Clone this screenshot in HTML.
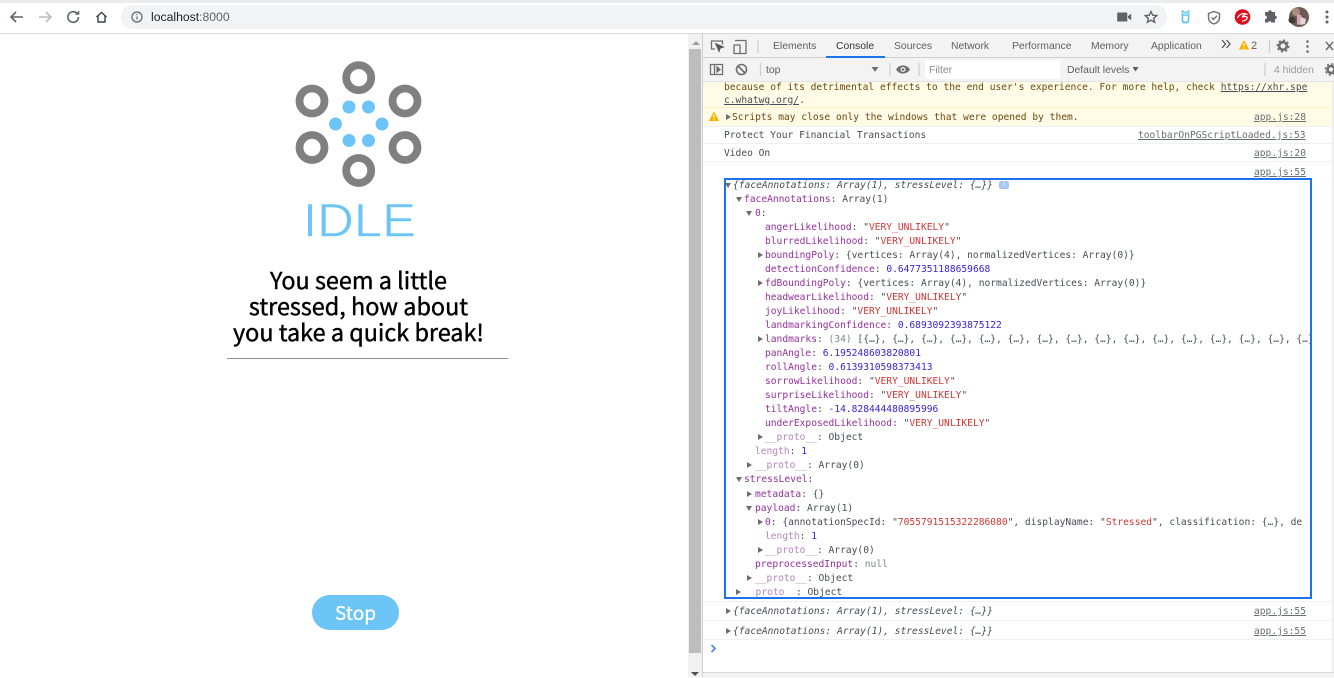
<!DOCTYPE html>
<html><head><meta charset="utf-8"><title>localhost:8000</title>
<style>
html,body{margin:0;padding:0;width:1334px;height:677px;overflow:hidden;background:#fff;font-family:"Liberation Sans",sans-serif}
.a{position:absolute}
#c{position:absolute;left:0;top:1px}
#c div{position:absolute;white-space:pre;font:9.6px/14px "DejaVu Sans Mono",monospace;color:#474d55;height:14px}
#c .o{font-style:italic}
i{font-style:normal}
.k{color:#94309c}.f{color:#b684bb}.s{color:#cf3733}.n{color:#3a22d6}.g{color:#80868b}
#c .l{color:#6a6e73;text-decoration:underline}
.t{position:absolute;font-size:10.4px;line-height:14px;color:#5f5f5f;white-space:pre}
.ar{position:absolute;width:0;height:0;border-top:3px solid transparent;border-bottom:3px solid transparent;border-left:5px solid #6e6e6e}
.ad{position:absolute;width:0;height:0;border-left:3px solid transparent;border-right:3px solid transparent;border-top:5px solid #6e6e6e}
.b{position:absolute;height:1px;background:#f0f0f0;left:703px;width:629px}
</style></head><body>
<!-- browser bar -->
<div class="a" style="left:0;top:0;width:1334px;height:3px;background:#e9ebee"></div>
<div class="a" style="left:0;top:33px;width:1334px;height:1px;background:#d5d7da"></div>
<div class="a" style="left:121px;top:5px;width:1046px;height:24px;border-radius:12px;background:#f1f3f4"></div>
<svg class="a" style="left:0;top:0" width="240" height="34" fill="none" stroke="#5f6368" stroke-width="1.6">
<path d="M23 17H11M16 12l-5 5 5 5"/>
<path d="M39 17h12M46 12l5 5-5 5" stroke="#b9bcc0"/>
<path d="M78.5 17a5.3 5.3 0 1 1-1.6-3.8"/><path d="M79.3 10.3v4.4h-4.4z" fill="#5f6368" stroke="none"/>
<path d="M96.5 17l5-4.6 5 4.6M98 16v6h7v-6" stroke="#3c4043" stroke-width="1.4"/>
<circle cx="137" cy="17" r="5" stroke-width="1.2"/><path d="M137 16.5v3M137 14v1.2" stroke-width="1.2"/>
</svg>
<div class="a" style="left:151px;top:9px;font-size:12.2px;line-height:16px;color:#202124">localhost<span style="color:#5f6368">:8000</span></div>
<svg class="a" style="left:1110px;top:0" width="224" height="34">
<path d="M8 12.5h8.500a.8.8 0 0 1 .8.8v7.400a.8.8 0 0 1-.8.8H8a.8.8 0 0 1-.8-.8v-7.400a.8.8 0 0 1 .8-.8zM18 16l3.200-2.200v6.400L18 18z" fill="#5f6368"/>
<path d="M41 11.500l1.700 3.700 4 .4-3 2.700.9 4-3.600-2.100-3.600 2.100.9-4-3-2.700 4-.4z" fill="none" stroke="#5f6368" stroke-width="1.400"/>
<path d="M72.500 14v7a1.500 1.500 0 0 0 1.500 1.500h3a1.500 1.500 0 0 0 1.500-1.500v-7" fill="none" stroke="#5cc3ee" stroke-width="1.700"/><path d="M72 10.500l3.500 2 3.500-2v4l-3.500 1.500-3.500-1.500z" fill="#a8e0f4" stroke="#5cc3ee" stroke-width=".8"/>
<path d="M104 11.500l5.500 2v4c0 3.500-2.500 5.500-5.500 6.500-3-1-5.500-3-5.500-6.500v-4z" fill="none" stroke="#6b6f73" stroke-width="1.400"/><path d="M101.500 17.500l2 2 3.500-3.800" fill="none" stroke="#6b6f73" stroke-width="1.400"/>
<circle cx="132.500" cy="17" r="7.800" fill="#dc0f1e"/><path d="M127.500 18c1.500-3.500 5.500-5.500 9-4-2 .3-3.500 1.200-4 3 2-.8 3.800-.6 5 .3-.7 2.700-3.500 4-5.500 3.500" fill="none" stroke="#fff" stroke-width="1.200"/>
<path d="M155 12h3.200a1.800 1.800 0 0 1 3.600 0h3.200v3.500a1.800 1.800 0 0 1 0 3.600v3.400h-3.600a1.800 1.800 0 0 0-3.400 0H155v-3.400a1.800 1.800 0 0 0 0-3.600z" fill="#5f6368"/>
<circle cx="189" cy="17" r="10" fill="#6d5a50"/><circle cx="186" cy="12" r="4" fill="#a98a7c"/><path d="M187 14l4 1 3 8-7 2z" fill="#d9a8b8"/><path d="M191 17l5 2-1 5-5 1z" fill="#dcdadc"/><circle cx="182" cy="20" r="3.500" fill="#3e3a36"/>
<circle cx="217" cy="12" r="1.500" fill="#5f6368"/><circle cx="217" cy="17" r="1.500" fill="#5f6368"/><circle cx="217" cy="22" r="1.500" fill="#5f6368"/>
</svg>

<!-- page -->
<svg class="a" style="left:290px;top:55px" width="140" height="195">
<g fill="none" stroke="#808080" stroke-width="7.800">
<circle cx="68.700" cy="22.700" r="12.500"/><circle cx="22" cy="46" r="12.500"/><circle cx="115" cy="46" r="12.500"/><circle cx="22" cy="92.500" r="12.500"/><circle cx="115" cy="92.500" r="12.500"/><circle cx="68.700" cy="115.500" r="12.500"/>
</g>
<g fill="#6dc4f7">
<circle cx="59" cy="52" r="6.500"/><circle cx="78.500" cy="52" r="6.500"/><circle cx="45.500" cy="69" r="6.500"/><circle cx="92" cy="69" r="6.500"/><circle cx="59" cy="85.500" r="6.500"/><circle cx="78.500" cy="85.500" r="6.500"/>
</g>
<text x="13" y="181.500" font-family="Liberation Sans" font-size="47" fill="#6dc4f7" stroke="#fff" stroke-width=".6" textLength="113" lengthAdjust="spacingAndGlyphs">IDLE</text>
</svg>
<div class="a" style="left:208.500px;top:266px;width:300px;text-align:center;font:23.400px/26px 'Noto Sans CJK JP','Liberation Sans',sans-serif;color:#000;white-space:pre;-webkit-text-stroke:.4px #000">You seem a little
stressed, how about
you take a quick break!</div>
<div class="a" style="left:227px;top:358px;width:281px;height:1px;background:#8c8c8c"></div>
<div class="a" style="left:312px;top:595px;width:87px;height:35px;border-radius:18px;background:#6dc4f7;color:#fff;text-align:center;font:19px/35px 'Noto Sans CJK JP','Liberation Sans',sans-serif;-webkit-text-stroke:.25px #fff">Stop</div>

<!-- scrollbar -->
<div class="a" style="left:688px;top:34px;width:14px;height:643px;background:#f1f1f1"></div>
<div class="a" style="left:689px;top:49px;width:12px;height:604px;background:#bdbdbd"></div>
<div class="ad" style="left:692px;top:41px;border-top:0;border-bottom:4px solid #a0a0a0;border-left-width:4px;border-right-width:4px"></div>
<div class="ad" style="left:691px;top:672px;border-top-color:#505050;border-left-width:4px;border-right-width:4px;border-top-width:4px"></div>

<!-- devtools -->
<div class="a" style="left:702px;top:34px;width:1px;height:643px;background:#cfcfcf"></div>
<div class="a" style="left:703px;top:34px;width:631px;height:47px;background:#f3f3f3"></div>
<div class="a" style="left:703px;top:57px;width:631px;height:1px;background:#d0d0d0"></div>
<div class="a" style="left:703px;top:81px;width:631px;height:1px;background:#e3e3e3"></div>
<div class="a" style="left:826px;top:56px;width:59px;height:2px;background:#1a73e8"></div>
<svg class="a" style="left:703px;top:34px" width="631" height="47" fill="none" stroke="#6e6e6e" stroke-width="1.300">
<path d="M12 15H8.500v-8h11v3.500"/><path d="M13 10l7 3-3 1-1 3z" fill="#5a5a5a" stroke="#5a5a5a"/>
<path d="M32 6.500h11v13h-6"/><path d="M31 11h6v8.500h-6z"/>
<path d="M55 6v13" stroke="#cfcfcf"/>
<path d="M7.500 30.500h12v10h-12zM11.500 30.500v10"/><path d="M14 33l3 2.500-3 2.500z" fill="#6e6e6e"/>
<circle cx="38.500" cy="35.500" r="5" stroke-width="1.600"/><path d="M35 32l7 7" stroke-width="1.600"/>
<path d="M57.500 29v13M187 29v13M216 29v13" stroke="#d0d0d0"/>
<path d="M193 35.500c2-3 4-4 7-4s5 1 7 4c-2 3-4 4-7 4s-5-1-7-4z" fill="#6e6e6e" stroke="none"/><circle cx="200" cy="35.500" r="2.500" fill="#f3f3f3" stroke="none"/><circle cx="200" cy="35.500" r="1.300" fill="#6e6e6e" stroke="none"/>
<path d="M168.500 33h7l-3.500 4.800z" fill="#6e6e6e" stroke="none"/>
<path d="M429.500 33h6l-3 4.500z" fill="#5a5a5a" stroke="none"/>
<path d="M519 6l3.500 4-3.500 4M523.500 6l3.500 4-3.500 4" stroke="#555"/>
<path d="M541 6l5.200 9.500h-10.400z" fill="#f5b301" stroke="none"/><path d="M541 9v3.500M541 13.500v1" stroke="#fff" stroke-width="1"/>
<path d="M566.500 6v13" stroke="#cfcfcf"/>
<circle cx="580" cy="12" r="3.800" stroke="#6e6e6e" stroke-width="2.600"/><circle cx="580" cy="12" r="5.800" stroke="#6e6e6e" stroke-width="1.400" stroke-dasharray="2.200 2.300"/>
<circle cx="604.500" cy="7.500" r="1.300" fill="#6e6e6e" stroke="none"/><circle cx="604.500" cy="12.500" r="1.300" fill="#6e6e6e" stroke="none"/><circle cx="604.500" cy="17.500" r="1.300" fill="#6e6e6e" stroke="none"/>
<path d="M623 8l7 8M630 8l-7 8" stroke-width="1.500"/>
<path d="M562 29v13" stroke="#d0d0d0"/>
<circle cx="628" cy="35.500" r="3.500" stroke-width="2.600"/><circle cx="628" cy="35.500" r="5.600" stroke-width="1.400" stroke-dasharray="2.200 2.200"/>
</svg>
<div class="t" style="left:773px;top:40px">Elements</div>
<div class="t" style="left:836px;top:40px;color:#333">Console</div>
<div class="t" style="left:894px;top:40px">Sources</div>
<div class="t" style="left:951px;top:40px">Network</div>
<div class="t" style="left:1012px;top:40px">Performance</div>
<div class="t" style="left:1091px;top:40px">Memory</div>
<div class="t" style="left:1151px;top:40px">Application</div>
<div class="t" style="left:1251px;top:39px;font-size:11px">2</div>
<div class="t" style="left:766px;top:64px">top</div>
<div class="a" style="left:925px;top:60px;width:135px;height:19px;background:#fff;border-radius:1px"></div>
<div class="t" style="left:929px;top:64px;color:#8a8a8a">Filter</div>
<div class="t" style="left:1067px;top:64px">Default levels</div>
<div class="t" style="left:1274px;top:64px;color:#9a9a9a">4 hidden</div>

<!-- console -->
<div class="a" style="left:703px;top:82px;width:629px;height:44px;background:#fffbe6"></div>
<div class="a" style="left:703px;top:107px;width:629px;height:1px;background:#fdf2c4"></div>
<div class="a" style="left:703px;top:126px;width:629px;height:1px;background:#f0f0f0"></div>
<div class="b" style="top:143px"></div>
<div class="b" style="top:161px"></div>
<div class="b" style="top:601px"></div>
<div class="b" style="top:620px"></div>
<div class="b" style="top:639px"></div>
<div class="a" style="left:703px;top:672px;width:631px;height:5px;background:#f3f3f3;border-top:1px solid #d8d8d8"></div>
<div class="a" style="left:1332px;top:82px;width:2px;height:590px;background:#eeeeee"></div>
<svg class="a" style="left:708px;top:111px" width="12" height="11"><path d="M6 .5l5.200 9.500H.8z" fill="#f5b301"/><path d="M6 3.500v3.500M6 8v1" stroke="#fff"/></svg>

<div id="c">
<div style="left:724px;top:80px;color:#6b4a10">because of its detrimental effects to the end user's experience. For more help, check <i style="text-decoration:underline;color:#474d55">https://xhr.spe</i></div>
<div style="left:724px;top:93px;color:#6b4a10"><i style="text-decoration:underline;color:#474d55">c.whatwg.org/</i>.</div>
<div style="left:732px;top:110px;color:#6b4a10">Scripts may close only the windows that were opened by them.</div>
<div style="left:724px;top:128px">Protect Your Financial Transactions</div>
<div style="left:724px;top:146px">Video On</div>
<div class="l" style="left:1254px;top:110px">app.js:28</div>
<div class="l" style="left:1138px;top:128px">toolbarOnPGScriptLoaded.js:53</div>
<div class="l" style="left:1254px;top:146px">app.js:20</div>
<div class="l" style="left:1254px;top:165px">app.js:55</div>

<div class="o" style="left:733px;top:178px">{faceAnnotations: Array(1), stressLevel: {…}}</div>
<div style="left:744px;top:192px"><i class="k">faceAnnotations</i>: Array(1)</div>
<div style="left:755px;top:206px"><i class="k">0</i>:</div>
<div style="left:765px;top:220px"><i class="k">angerLikelihood</i>: "<i class="s">VERY_UNLIKELY</i>"</div>
<div style="left:765px;top:234px"><i class="k">blurredLikelihood</i>: "<i class="s">VERY_UNLIKELY</i>"</div>
<div style="left:765px;top:248px"><i class="k">boundingPoly</i>: {vertices: Array(4), normalizedVertices: Array(0)}</div>
<div style="left:765px;top:262px"><i class="k">detectionConfidence</i>: <i class="n">0.6477351188659668</i></div>
<div style="left:765px;top:276px"><i class="k">fdBoundingPoly</i>: {vertices: Array(4), normalizedVertices: Array(0)}</div>
<div style="left:765px;top:290px"><i class="k">headwearLikelihood</i>: "<i class="s">VERY_UNLIKELY</i>"</div>
<div style="left:765px;top:304px"><i class="k">joyLikelihood</i>: "<i class="s">VERY_UNLIKELY</i>"</div>
<div style="left:765px;top:318px"><i class="k">landmarkingConfidence</i>: <i class="n">0.6893092393875122</i></div>
<div style="left:765px;top:332px;width:545px;overflow:hidden"><i class="k">landmarks</i>: <i class="g">(34)</i> [{…}, {…}, {…}, {…}, {…}, {…}, {…}, {…}, {…}, {…}, {…}, {…}, {…}, {…}, {…}, {…}, {…}</div>
<div style="left:765px;top:346px"><i class="k">panAngle</i>: <i class="n">6.195248603820801</i></div>
<div style="left:765px;top:360px"><i class="k">rollAngle</i>: <i class="n">0.6139310598373413</i></div>
<div style="left:765px;top:374px"><i class="k">sorrowLikelihood</i>: "<i class="s">VERY_UNLIKELY</i>"</div>
<div style="left:765px;top:388px"><i class="k">surpriseLikelihood</i>: "<i class="s">VERY_UNLIKELY</i>"</div>
<div style="left:765px;top:402px"><i class="k">tiltAngle</i>: <i class="n">-14.828444480895996</i></div>
<div style="left:765px;top:416px"><i class="k">underExposedLikelihood</i>: "<i class="s">VERY_UNLIKELY</i>"</div>
<div style="left:765px;top:430px"><i class="f">__proto__</i>: Object</div>
<div style="left:755px;top:444px"><i class="f">length</i>: <i class="n">1</i></div>
<div style="left:755px;top:458px"><i class="f">__proto__</i>: Array(0)</div>
<div style="left:744px;top:472px"><i class="k">stressLevel</i>:</div>
<div style="left:755px;top:487px"><i class="k">metadata</i>: {}</div>
<div style="left:755px;top:501px"><i class="k">payload</i>: Array(1)</div>
<div style="left:765px;top:515px;width:545px;overflow:hidden"><i class="k">0</i>: {annotationSpecId: "<i class="s">7055791515322286080</i>", displayName: "<i class="s">Stressed</i>", classification: {…}, de</div>
<div style="left:765px;top:529px"><i class="f">length</i>: <i class="n">1</i></div>
<div style="left:765px;top:543px"><i class="f">__proto__</i>: Array(0)</div>
<div style="left:755px;top:557px"><i class="k">preprocessedInput</i>: <i class="g">null</i></div>
<div style="left:755px;top:571px"><i class="f">__proto__</i>: Object</div>
<div style="left:744px;top:585px"><i class="f">__proto__</i>: Object</div>
<div class="o" style="left:733px;top:604px">{faceAnnotations: Array(1), stressLevel: {…}}</div>
<div class="o" style="left:733px;top:624px">{faceAnnotations: Array(1), stressLevel: {…}}</div>
<div class="l" style="left:1254px;top:604px">app.js:55</div>
<div class="l" style="left:1254px;top:624px">app.js:55</div>
</div>
<div class="a" style="left:724px;top:178px;width:584px;height:417px;border:2px solid #1a73e8"></div>

<!-- tree arrows -->
<div class="ar" style="left:726px;top:114px"></div>
<div class="ad" style="left:725px;top:183px"></div>
<div class="ad" style="left:736px;top:197px"></div>
<div class="ad" style="left:746px;top:211px"></div>
<div class="ar" style="left:758px;top:252px"></div>
<div class="ar" style="left:758px;top:280px"></div>
<div class="ar" style="left:758px;top:336px"></div>
<div class="ar" style="left:758px;top:434px"></div>
<div class="ar" style="left:747px;top:462px"></div>
<div class="ad" style="left:736px;top:477px"></div>
<div class="ar" style="left:747px;top:491px"></div>
<div class="ad" style="left:746px;top:506px"></div>
<div class="ar" style="left:758px;top:519px"></div>
<div class="ar" style="left:758px;top:547px"></div>
<div class="ar" style="left:747px;top:575px"></div>
<div class="ar" style="left:736px;top:589px"></div>
<div class="ar" style="left:726px;top:608px"></div>
<div class="ar" style="left:726px;top:628px"></div>
<div class="a" style="left:999px;top:181px;width:10px;height:8px;border-radius:2px;background:#a9c7f5;color:#fff;font:7px/8px 'Liberation Sans',sans-serif;text-align:center">i</div>
<svg class="a" style="left:710px;top:644px" width="8" height="10" fill="none" stroke="#367cf1" stroke-width="1.500"><path d="M1.500 1l3.500 3.500L1.500 8"/></svg>
</body></html>
